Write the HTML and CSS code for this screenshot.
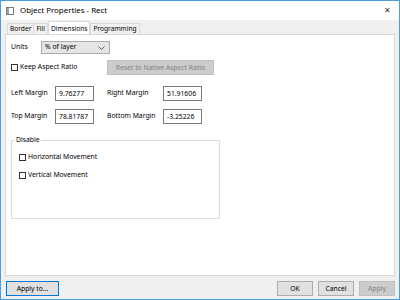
FILE: index.html
```html
<!DOCTYPE html>
<html lang="en">
<head>
    <meta charset="UTF-8">
    <title>Object Properties - Rect</title>
    <link rel="stylesheet" href="styles.css">
</head>
<body>
    <div class="window">
        <div class="titlebar">
            <svg class="app-icon" width="8" height="8" viewBox="0 0 8 8">
                <rect x="0.5" y="0.5" width="7" height="7" fill="#fff" stroke="#7a7a7a"/>
                <rect x="1" y="1" width="2" height="6" fill="#9aa4ad"/>
            </svg>
            <span class="title">Object Properties - Rect</span>
            <span class="close">&#x2715;</span>
        </div>
        <div class="client">
            <div class="tabs">
                <div class="tab">Border</div>
                <div class="tab">Fill</div>
                <div class="tab active">Dimensions</div>
                <div class="tab">Programming</div>
            </div>
            <div class="panel">
                <div class="row units-row">
                    <span class="label units-label">Units</span>
                    <div class="select">
                        <span>% of layer</span>
                        <svg width="7" height="4" viewBox="0 0 7 4"><path d="M0.5 0.5 L3.5 3.5 L6.5 0.5" fill="none" stroke="#555" stroke-width="0.9"/></svg>
                    </div>
                </div>
                <div class="row aspect-row">
                    <label class="check keep"><span class="box"></span>Keep Aspect Ratio</label>
                    <button class="btn disabled reset">Reset to Native Aspect Ratio</button>
                </div>
                <div class="margins">
                    <span class="label">Left Margin</span>
                    <div class="field">9.76277</div>
                    <span class="label right">Right Margin</span>
                    <div class="field">51.91606</div>
                    <span class="label">Top Margin</span>
                    <div class="field">78.81787</div>
                    <span class="label right">Bottom Margin</span>
                    <div class="field">-3.25226</div>
                </div>
                <fieldset class="group">
                    <legend>Disable</legend>
                    <label class="check"><span class="box"></span>Horizontal Movement</label>
                    <label class="check"><span class="box"></span>Vertical Movement</label>
                </fieldset>
            </div>
            <div class="footer">
                <button class="btn focused">Apply to...</button>
                <div class="spacer"></div>
                <button class="btn">OK</button>
                <button class="btn">Cancel</button>
                <button class="btn disabled">Apply</button>
            </div>
        </div>
    </div>
</body>
</html>
```

FILE: styles.css
```css
* {
    box-sizing: border-box;
}

body {
    margin: 0;
    font-family: "Noto Sans", "Open Sans", sans-serif;
    font-size: 6.8px;
    line-height: 1.3;
    color: #000;
}

.window {
    width: 400px;
    height: 300px;
    border: 1px solid #4a9de0;
    display: flex;
    flex-direction: column;
    background: #f0f0f0;
}

.titlebar {
    height: 19px;
    background: #fff;
    display: flex;
    align-items: center;
    padding: 0 6px 0 5px;
}

.app-icon {
    margin-right: 6px;
}

.title {
    font-size: 7.9px;
    flex: 1;
}

.close {
    font-size: 8px;
    color: #333;
    margin-right: 2px;
}

.client {
    flex: 1;
    display: flex;
    flex-direction: column;
    padding: 2px 4px 3px 4px;
}

.tabs {
    display: flex;
    height: 12px;
    align-items: flex-end;
    padding-left: 2px;
    position: relative;
    z-index: 1;
}

.tab {
    height: 11px;
    padding: 0 2px;
    border: 1px solid #d9d9d9;
    border-bottom: none;
    background: #f0f0f0;
    line-height: 10px;
    margin-right: -1px;
    font-size: 6.6px;
}

.tab.active {
    height: 13px;
    background: #fff;
    line-height: 13px;
    margin-left: 1px;
    margin-right: 0;
}

.panel {
    flex: 1;
    background: #fff;
    border: 1px solid #d9d9d9;
    padding: 6px 5px;
}

.row {
    display: flex;
    align-items: center;
}

.units-label {
    width: 30px;
}

.select {
    width: 69px;
    height: 13px;
    border: 1px solid #acacac;
    background: #e5e5e5;
    display: flex;
    align-items: center;
    justify-content: space-between;
    padding: 0 4px 0 3px;
}

.aspect-row {
    margin-top: 6px;
}

.check {
    display: flex;
    align-items: center;
}

.box {
    width: 7px;
    height: 7px;
    border: 1px solid #333;
    background: #fff;
    margin-right: 2px;
}

.keep {
    width: 96px;
}

.btn {
    font-family: inherit;
    font-size: 6.8px;
    height: 15px;
    border: 1px solid #adadad;
    background: #e1e1e1;
    color: #000;
    padding: 0;
}

.btn.disabled {
    background: #cccccc;
    border-color: #bfbfbf;
    color: #838383;
}

.reset {
    width: 107px;
}

.margins {
    display: grid;
    grid-template-columns: 44px 39px 69px 39px;
    row-gap: 8px;
    align-items: center;
    margin-top: 11px;
}

.margins .right {
    margin-left: 13px;
}

.field {
    height: 15px;
    border: 1px solid #7a7a7a;
    padding: 0 3px;
    line-height: 13px;
}

.group {
    width: 209px;
    height: 83px;
    margin: 12px 0 0 0;
    border: 1px solid #dcdcdc;
    padding: 2px 7px;
}

.group legend {
    padding: 0 1px;
    margin-left: -4px;
}

.group .check {
    margin-top: 3px;
    height: 15px;
}

.footer {
    display: flex;
    margin-top: 5px;
    gap: 5px;
}

.spacer {
    flex: 1;
}

.footer .btn {
    width: 36px;
}

.footer .btn.focused {
    width: 53px;
    border: 1px solid #0078d7;
    margin-left: 1px;
}
```
